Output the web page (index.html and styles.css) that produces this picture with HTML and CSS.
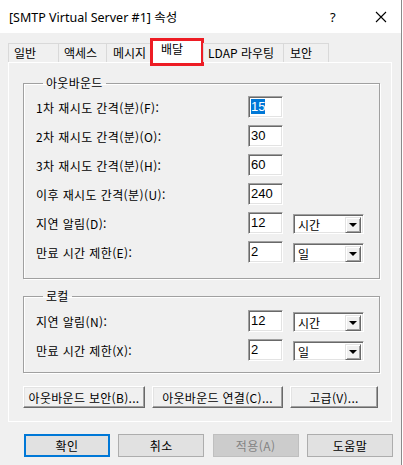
FILE: index.html
```html
<!DOCTYPE html>
<html lang="ko">
<head>
    <meta charset="UTF-8">
    <title>[SMTP Virtual Server #1] 속성</title>
    <link rel="stylesheet" href="styles.css">
</head>
<body>

<div class="window">
    <!-- Заголовок окна -->
    <div class="titlebar">
        <span class="title">[SMTP Virtual Server #1] 속성</span>
        <span class="help">?</span>
        <span class="close">
            <svg width="12" height="12" viewBox="0 0 12 12"><path d="M1 1L11 11M11 1L1 11" stroke="#000" stroke-width="1.1"/></svg>
        </span>
    </div>

    <div class="dialog">
        <!-- Вкладки -->
        <div class="tabs">
            <div class="tab tab-general">일반</div>
            <div class="tab tab-access">액세스</div>
            <div class="tab tab-message">메시지</div>
            <div class="tab tab-delivery active">배달</div>
            <div class="tab tab-ldap">LDAP 라우팅</div>
            <div class="tab tab-security">보안</div>
        </div>

        <div class="panel">
            <fieldset class="group outbound">
                <legend>아웃바운드</legend>
                <div class="row"><label>1차 재시도 간격(분)(F):</label><span class="field"><span class="selected-text">15</span></span></div>
                <div class="row"><label>2차 재시도 간격(분)(O):</label><span class="field">30</span></div>
                <div class="row"><label>3차 재시도 간격(분)(H):</label><span class="field">60</span></div>
                <div class="row"><label>이후 재시도 간격(분)(U):</label><span class="field">240</span></div>
                <div class="row"><label>지연 알림(D):</label><span class="field">12</span><span class="combo"><span class="combo-text">시간</span><span class="combo-arrow"></span></span></div>
                <div class="row"><label>만료 시간 제한(E):</label><span class="field">2</span><span class="combo"><span class="combo-text">일</span><span class="combo-arrow"></span></span></div>
            </fieldset>

            <fieldset class="group local">
                <legend>로컬</legend>
                <div class="row"><label>지연 알림(N):</label><span class="field">12</span><span class="combo"><span class="combo-text">시간</span><span class="combo-arrow"></span></span></div>
                <div class="row"><label>만료 시간 제한(X):</label><span class="field">2</span><span class="combo"><span class="combo-text">일</span><span class="combo-arrow"></span></span></div>
            </fieldset>

            <div class="group-buttons">
                <button class="raised btn-security">아웃바운드 보안(B)...</button>
                <button class="raised btn-connect">아웃바운드 연결(C)...</button>
                <button class="raised btn-advanced">고급(V)...</button>
            </div>
        </div>

        <!-- Кнопки диалога -->
        <div class="dialog-buttons">
            <button class="button default">확인</button>
            <button class="button">취소</button>
            <button class="button disabled">적용(A)</button>
            <button class="button">도움말</button>
        </div>
    </div>
</div>

</body>
</html>
```

FILE: styles.css
```css
body { margin: 0; background: #fff; font-family: "Noto Sans CJK KR", "Noto Sans", sans-serif; font-size: 12px; color: #000; }

.window {
    width: 401px;
    height: 465px;
    border-right: 1px solid #8a8a8a;
    background: #f0f0f0;
}

/* Заголовок */
.titlebar {
    height: 33px;
    background: #fff;
    display: flex;
    align-items: center;
    padding-left: 9px;
}
.title { font-family: "Noto Sans", "Noto Sans CJK KR", sans-serif; font-size: 12.5px; flex: 1; }
.help { font-family: "Noto Sans", sans-serif; font-size: 13px; width: 45px; }
.close { width: 26px; display: flex; }

.dialog { padding: 10px 0 0 8px; }

/* Вкладки */
.tabs { display: flex; height: 19px; position: relative; z-index: 1; }
.tab {
    box-sizing: border-box;
    height: 19px;
    border: 1px solid #d9d9d9;
    border-bottom: none;
    margin-right: -1px;
    padding-left: 5px;
    line-height: 18px;
    background: #f0f0f0;
}
.tab-general { width: 51px; }
.tab-access { width: 49px; }
.tab-message { width: 45px; padding-left: 6px; }
.tab-ldap { width: 81px; padding-left: 4px; }
.tab-security { width: 46px; padding-left: 6px; }
.tab.active {
    width: 54px;
    height: 28px;
    margin-top: -5px;
    border: 3px solid #ed1c24;
    background: #fff;
    padding-left: 8px;
    line-height: 16px;
}

.panel {
    box-sizing: border-box;
    width: 384px;
    height: 360px;
    border: 1px solid #fff;
    padding: 12px 0 0 14px;
}

/* Группы */
.group {
    box-sizing: border-box;
    width: 357px;
    margin: 0;
    padding: 0 0 0 12px;
    border: 1px solid #a0a0a0;
    box-shadow: 1px 1px 0 #fff, inset 1px 1px 0 #fff;
}
.group legend { margin-left: 7px; padding: 0 3px; line-height: 16px; letter-spacing: 0.3px; }
.outbound { height: 204px; padding-top: 5px; }
.local { height: 85px; margin-top: 9px; padding-top: 6px; }

.row { display: flex; align-items: flex-end; height: 22px; margin-bottom: 7px; }
.row label { width: 212px; align-self: center; letter-spacing: 0.4px; }

.field {
    box-sizing: border-box;
    width: 35px;
    height: 22px;
    background: #fff;
    border: 1px solid;
    border-color: #a0a0a0 #fff #fff #a0a0a0;
    box-shadow: inset 1px 1px 0 #696969, inset -1px -1px 0 #e3e3e3;
    padding: 2px 0 0 2px;
    font-family: "Liberation Sans", sans-serif;
    font-size: 13px;
    line-height: 16px;
}
.selected-text { background: #0078d7; color: #fff; }

.combo {
    box-sizing: border-box;
    width: 71px;
    height: 20px;
    margin-left: 10px;
    background: #fff;
    border: 1px solid;
    border-color: #a0a0a0 #fff #fff #a0a0a0;
    box-shadow: inset 1px 1px 0 #696969, inset -1px -1px 0 #e3e3e3;
    display: flex;
    padding: 2px;
}
.combo-text { flex: 1; padding-left: 2px; line-height: 16px; }
.combo-arrow {
    box-sizing: border-box;
    width: 16px;
    height: 16px;
    background: #f0f0f0;
    border: 1px solid;
    border-color: #e3e3e3 #696969 #696969 #e3e3e3;
    box-shadow: inset 1px 1px 0 #fff, inset -1px -1px 0 #a0a0a0;
    display: flex;
    align-items: center;
    justify-content: center;
}
.combo-arrow::after {
    content: "";
    border-left: 4px solid transparent;
    border-right: 4px solid transparent;
    border-top: 4px solid #000;
}

/* Кнопки внутри вкладки */
.group-buttons { display: flex; gap: 7px; margin-top: 13px; }
.raised {
    box-sizing: border-box;
    height: 22px;
    background: #f0f0f0;
    border: 1px solid;
    border-color: #fff #696969 #696969 #fff;
    box-shadow: inset -1px -1px 0 #a0a0a0, inset 1px 1px 0 #e3e3e3;
    font-family: inherit;
    font-size: 12px;
    letter-spacing: 0.3px;
    padding: 0;
}
.btn-security { width: 122px; }
.btn-connect { width: 131px; }
.btn-advanced { width: 88px; }

/* Кнопки диалога */
.dialog-buttons {
    display: flex;
    justify-content: space-between;
    width: 369px;
    margin: 12px 0 0 16px;
}
.button {
    box-sizing: border-box;
    width: 86px;
    height: 23px;
    background: #e1e1e1;
    border: 1px solid #adadad;
    font-family: inherit;
    font-size: 12px;
    letter-spacing: 0.5px;
    padding: 0;
}
.button.default { border: 2px solid #0078d7; }
.button.disabled { background: #cccccc; border-color: #bfbfbf; color: #838383; }
```
